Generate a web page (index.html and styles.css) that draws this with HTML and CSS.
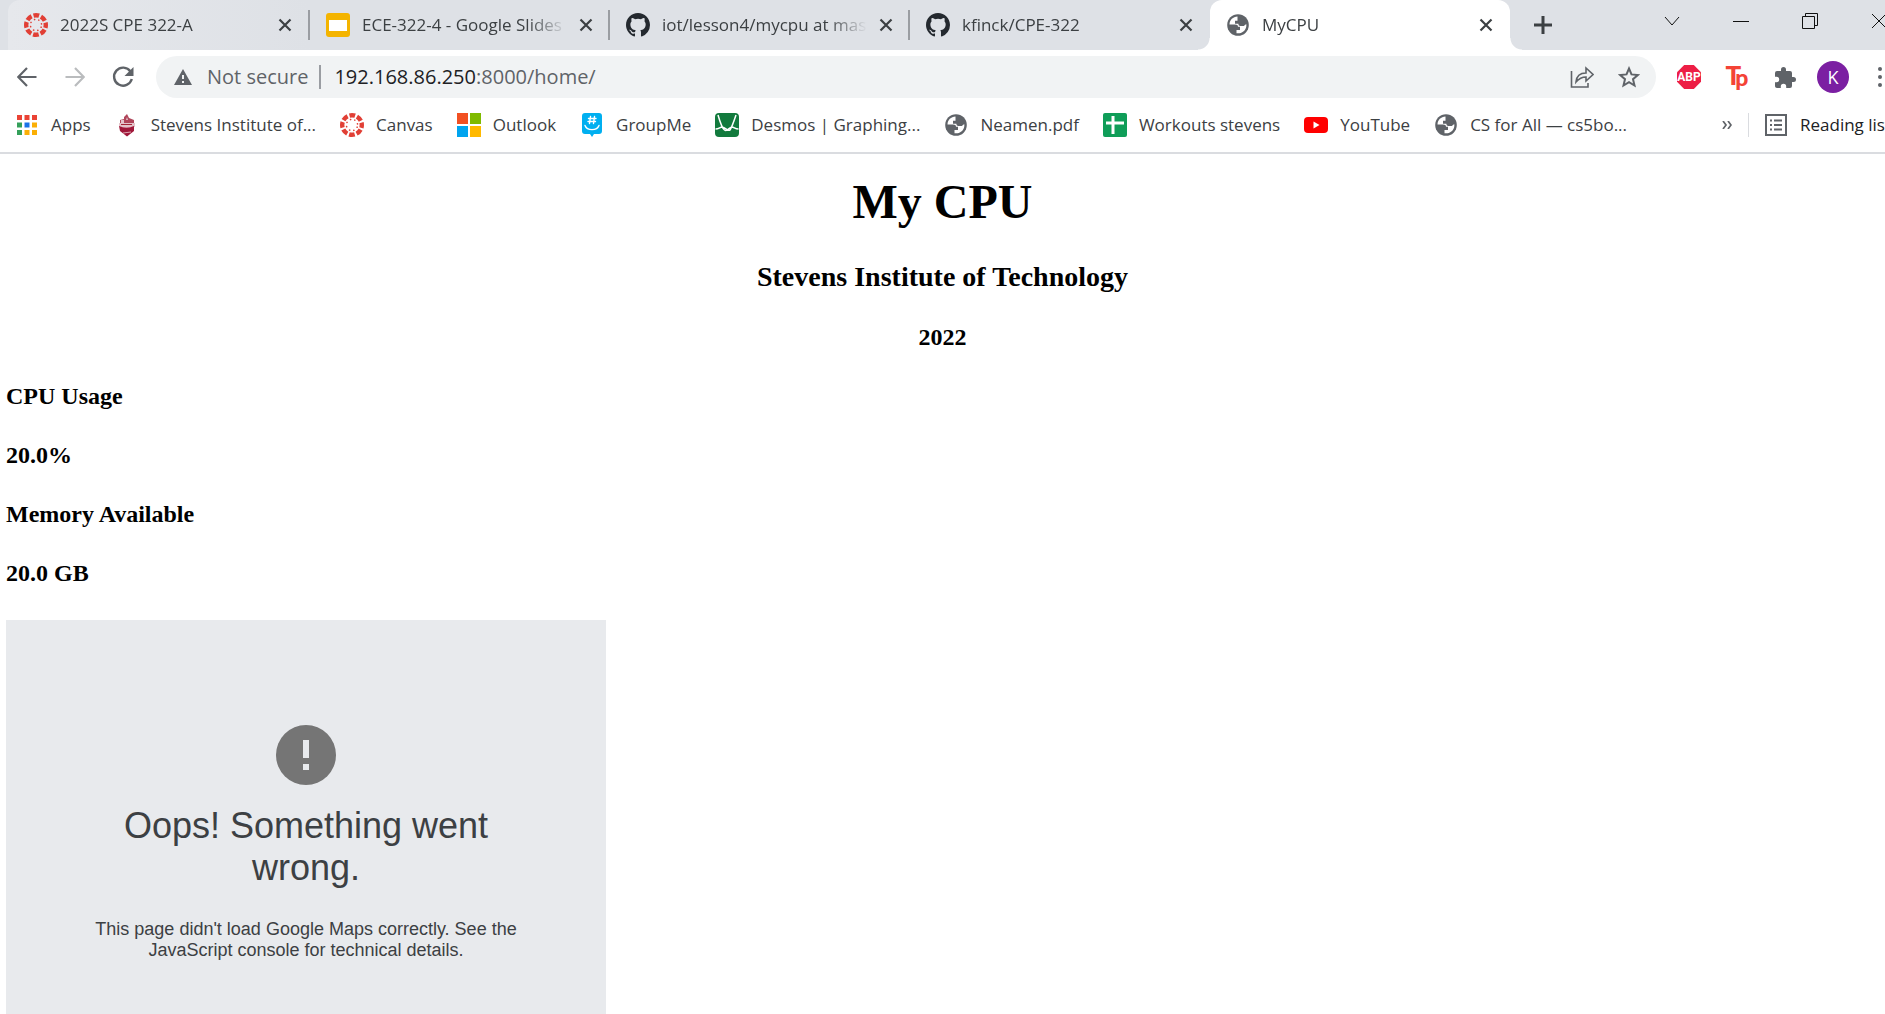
FILE: index.html
```html
<!DOCTYPE html>
<html lang="en">
<head>
<meta charset="utf-8">
<title>MyCPU</title>
<link rel="stylesheet" href="styles.css">
</head>
<body>
<svg class="defs" aria-hidden="true">
  <symbol id="canvas" viewBox="0 0 24 24">
    <circle cx="12" cy="12" r="9.800" fill="none" stroke="#e13f35" stroke-width="4.400" stroke-dasharray="5.700 2" stroke-dashoffset="2.850"/>
    <circle cx="12" cy="12" r="5.600" fill="none" stroke="#e13f35" stroke-width="1.600" stroke-linecap="round" stroke-dasharray="0.100 4.300" stroke-dashoffset="2.200"/>
  </symbol>
  <symbol id="github" viewBox="0 0 16 16"><path fill="#24292f" d="M8 0C3.580 0 0 3.580 0 8c0 3.540 2.290 6.530 5.470 7.590.4.070.55-.17.55-.38 0-.19-.01-.82-.01-1.490-2.010.37-2.530-.49-2.690-.94-.09-.23-.48-.94-.82-1.130-.28-.15-.68-.52-.01-.53.63-.01 1.080.58 1.230.82.72 1.210 1.870.87 2.330.66.070-.52.280-.87.510-1.070-1.780-.2-3.640-.89-3.640-3.950 0-.87.310-1.590.82-2.150-.08-.2-.36-1.020.08-2.120 0 0 .67-.21 2.200.82a7.600 7.600 0 0 1 4 0c1.530-1.040 2.200-.82 2.200-.82.44 1.100.16 1.920.08 2.120.51.56.82 1.270.82 2.150 0 3.070-1.870 3.750-3.650 3.950.29.25.54.73.54 1.480 0 1.070-.01 1.930-.01 2.200 0 .21.15.46.55.38A8 8 0 0 0 16 8c0-4.420-3.580-8-8-8z"/></symbol>
  <symbol id="globe" viewBox="0 0 22 22">
    <circle cx="11" cy="11" r="10.800" fill="#5f6368"/>
    <path fill="#fff" d="M10.500 2.500C6 2.600 2.700 6 2.500 10.500h5.500c2 0 3 .8 3 2.300h2v3.200H9.500v3.200c4.500.9 8.800-2 9.700-6.200.2-1 .2-2 0-3l-2.400 2h-3.500c-1.200 0-1.900-.8-1.900-2.200H8V6.700h2.500z"/>
  </symbol>
  <symbol id="close" viewBox="0 0 14 14"><path d="M1.500 1.500l11 11M12.500 1.500l-11 11" fill="none" stroke="#3c4043" stroke-width="2.200"/></symbol>
</svg>
<header class="browser">
  <nav class="tabs" aria-label="Tabs">
    <div class="tab hover"><svg class="icon"><use href="#canvas"/></svg><span class="label">2022S CPE 322-A</span><button class="x" aria-label="Close"><svg><use href="#close"/></svg></button></div>
    <div class="tab"><svg class="icon" viewBox="0 0 24 24"><rect width="24" height="24" rx="3" fill="#f4b400"/><path fill="#fff" d="M3 7h18v11H3z"/></svg><span class="label">ECE-322-4 - Google Slides</span><button class="x" aria-label="Close"><svg><use href="#close"/></svg></button></div>
    <div class="tab"><svg class="icon"><use href="#github"/></svg><span class="label">iot/lesson4/mycpu at master</span><button class="x" aria-label="Close"><svg><use href="#close"/></svg></button></div>
    <div class="tab last"><svg class="icon"><use href="#github"/></svg><span class="label">kfinck/CPE-322</span><button class="x" aria-label="Close"><svg><use href="#close"/></svg></button></div>
    <div class="tab active"><svg class="icon globe"><use href="#globe"/></svg><span class="label">MyCPU</span><button class="x" aria-label="Close"><svg><use href="#close"/></svg></button></div>
    <button class="new" aria-label="New tab"><svg viewBox="0 0 18 18"><path d="M9 0v18M0 9h18" stroke="#3c4043" stroke-width="3"/></svg></button>
    <div class="window">
      <button aria-label="Search tabs"><svg viewBox="0 0 16 16"><path d="M1 4l7 8 7-8"/></svg></button>
      <button aria-label="Minimize"><svg viewBox="0 0 16 16"><path d="M0 8.500h16"/></svg></button>
      <button aria-label="Restore"><svg viewBox="0 0 16 16"><path d="M.5 3.500h12v12H.5zM3.500 3.500v-3h12v12h-3"/></svg></button>
      <button aria-label="Close window"><svg viewBox="0 0 16 16"><path d="M1 1l14 14M15 1L1 15"/></svg></button>
    </div>
  </nav>
  <div class="toolbar">
    <button aria-label="Back"><svg viewBox="0 0 20 20"><path d="M19.500 10H2M10 1L1.200 10l8.800 9" fill="none" stroke="#5f6368" stroke-width="2.200"/></svg></button>
    <button aria-label="Forward"><svg viewBox="0 0 20 20"><path d="M.5 10H18M10 1l8.800 9-8.800 9" fill="none" stroke="#babcbe" stroke-width="2.200"/></svg></button>
    <button aria-label="Reload"><svg viewBox="0 0 22 22"><path d="M18.500 5.500A9 9 0 1 0 19.800 13" fill="none" stroke="#5f6368" stroke-width="2.400"/><path d="M21.500 1v9h-9z" fill="#5f6368"/></svg></button>
    <div class="omnibox">
      <svg class="warn" viewBox="0 0 18 16"><path d="M9 0l9 16H0z" fill="#5f6368"/><path d="M9 6v4M9 12v2" stroke="#f1f3f4" stroke-width="2"/></svg>
      <span class="secure">Not secure</span>
      <div class="url" role="textbox" aria-label="Address" contenteditable="true" spellcheck="false">192.168.86.250<span>:8000/home/</span></div>
      <button aria-label="Share"><svg class="share" viewBox="0 0 24 22"><path d="M1.500 5v16h16.500v-4M6 16c.5-6 4-9 10-9V2l7 6.500-7 6.500v-4c-4 0-7 1.500-10 5z" fill="none" stroke="#5f6368" stroke-width="1.600"/></svg></button>
      <button aria-label="Bookmark"><svg class="star" viewBox="0 0 22 22"><path d="M11 2.500l2.500 5.900 6.400.6-4.900 4.200 1.500 6.300L11 16.200l-5.500 3.300L7 13.200 2.100 9l6.400-.6z" fill="none" stroke="#5f6368" stroke-width="2"/></svg></button>
    </div>
    <div class="extensions">
      <button class="abp">ABP</button>
      <button class="tp"><span>T</span><span class="low">p</span></button>
      <button aria-label="Extensions"><svg viewBox="2 1 21 21"><path fill="#5f6368" d="M20.500 11H19V7a2 2 0 0 0-2-2h-4V3.500a2.500 2.500 0 0 0-5 0V5H4a2 2 0 0 0-2 2v3.800h1.500a2.700 2.700 0 0 1 0 5.400H2V20c0 1.100.9 2 2 2h3.800v-1.500a2.700 2.700 0 0 1 5.400 0V22H17a2 2 0 0 0 2-2v-4h1.500a2.500 2.500 0 0 0 0-5z"/></svg></button>
      <button class="avatar">K</button>
      <button class="more" aria-label="Menu"><svg viewBox="0 0 4 20"><g fill="#5f6368"><circle cx="2" cy="2" r="2"/><circle cx="2" cy="10" r="2"/><circle cx="2" cy="18" r="2"/></g></svg></button>
    </div>
  </div>
  <nav class="bookmarks" aria-label="Bookmarks">
    <a href="#"><svg class="apps" viewBox="0 0 20 20"><path fill="#ea4335" d="M0 0h5v5H0zM7.500 0h5v5h-5zM15 0h5v5h-5z"/><path fill="#34a05a" d="M0 7.500h5v5H0zM0 15h5v5H0z"/><path fill="#1a73e8" d="M7.500 7.500h5v5h-5z"/><path fill="#fbaf05" d="M15 7.500h5v5h-5zM7.500 15h5v5h-5zM15 15h5v5h-5z"/></svg>Apps</a>
    <a href="#"><svg class="stevens" viewBox="0 0 16 24"><path fill="#b0455a" d="M1 7l4-1V4l3-3 2 4 5 2v3H1z"/><path fill="#e3c3ca" d="M2 7h3v3H2zM8 4l1 3H7zM0 10h16v4H0z"/><path stroke="#a32638" d="M2 11.500h11"/><path fill="#a0183a" d="M0 13c5 2 10 2 15 0v5l-7 5.500L1 18z"/><path d="M4 20l8-1" stroke="#dba5b0"/></svg>Stevens Institute of...</a>
    <a href="#"><svg class="icon"><use href="#canvas"/></svg>Canvas</a>
    <a href="#"><svg class="icon" viewBox="0 0 24 24"><path fill="#f25022" d="M0 0h11v11H0z"/><path fill="#7fba00" d="M13 0h11v11H13z"/><path fill="#00a4ef" d="M0 13h11v11H0z"/><path fill="#ffb900" d="M13 13h11v11H13z"/></svg>Outlook</a>
    <a href="#"><svg class="icon" viewBox="0 0 24 24"><path fill="#00aff0" d="M5 0h14q3 0 3 3v15q0 3-3 3h-5l-2 3-2-3H5q-3 0-3-3V3q0-3 3-3z"/><path d="M10.500 3.500l-1 7M14.500 3.500l-1 7M8.500 5.500h7.500M8 8.500h7.500M5 12.500c2 5.500 12 5.500 14 0" fill="none" stroke="#fff" stroke-width="1.400" stroke-linecap="round"/></svg>GroupMe</a>
    <a href="#"><svg class="icon" viewBox="0 0 24 24"><rect width="24" height="24" rx="4" fill="#127a3d"/><path d="M3 2c2 7 4 13 6.500 15 3 2 5-3 7.500-3 2 0 3 2 6.500 2M21 2c-2 6-4 12-6 15-2 2-5-3-8-3-2 0-3 2-6.500 2" fill="none" stroke="#fff" stroke-width="1.500"/></svg>Desmos | Graphing...</a>
    <a href="#"><svg class="icon globe"><use href="#globe"/></svg>Neamen.pdf</a>
    <a href="#"><svg class="icon" viewBox="0 0 24 24"><rect width="24" height="24" rx="2" fill="#0f9d58"/><path d="M10 3v18M3 10h18" stroke="#fff" stroke-width="3"/></svg>Workouts stevens</a>
    <a href="#"><svg class="icon" viewBox="0 0 24 24"><rect y="4" width="24" height="16" rx="4" fill="#f00"/><path d="M9.500 8.500l6 3.500-6 3.500z" fill="#fff"/></svg>YouTube</a>
    <a href="#"><svg class="icon globe"><use href="#globe"/></svg>CS for All — cs5bo...</a>
    <button class="overflow" aria-label="More bookmarks"><svg viewBox="0 0 10 8"><path d="M1 0l3 4-3 4M6 0l3 4-3 4" fill="none" stroke="#5f6368" stroke-width="1.700"/></svg></button>
    <button class="reading"><svg viewBox="0 0 22 22"><path d="M1 1h20v20H1z" fill="none" stroke="#5f6368" stroke-width="2"/><path d="M5 6.500h2M5 11h2M5 15.500h2M9 6.500h8M9 11h8M9 15.500h8" stroke="#5f6368" stroke-width="2"/></svg>Reading list</button>
  </nav>
</header>
<main>
  <div class="heading">
    <h1>My CPU</h1>
    <h2>Stevens Institute of Technology</h2>
    <h3>2022</h3>
  </div>
  <h3>CPU Usage</h3>
  <h3>20.0%</h3>
  <h3>Memory Available</h3>
  <h3>20.0 GB</h3>
  <section class="map">
    <svg viewBox="0 0 60 60"><circle cx="30" cy="30" r="30" fill="#757575"/><path d="M27 15h6v18h-6zM27 39h6v6h-6z" fill="#e8eaed"/></svg>
    <p class="title">Oops! Something went wrong.</p>
    <p class="message">This page didn't load Google Maps correctly. See the JavaScript console for technical details.</p>
  </section>
</main>
</body>
</html>
```
FILE: styles.css
```css
* { box-sizing: border-box; }
body { margin: 0; height: 100vh; overflow: hidden; background: #fff; color: #000; font-family: "Liberation Serif", "Times New Roman", serif; }
button { display: flex; align-items: center; justify-content: center; flex: none; padding: 0; border: 0; background: none; color: inherit; font: inherit; }
svg { display: block; flex: none; }
.defs { width: 0; height: 0; position: absolute; }
.icon { width: 24px; height: 24px; }
.icon.globe { width: 22px; height: 22px; margin: 0 1px; }

.browser { border-bottom: 2px solid #dadce0; color: #3c4043; font: 17px/24px "Open Sans", "Segoe UI", sans-serif; white-space: nowrap; overflow: hidden; }
.tabs { display: flex; height: 50px; background: #dee1e6; padding-left: 8px; overflow: hidden; }
.tab { position: relative; display: flex; align-items: center; flex: none; width: 300px; padding: 0 17px 0 16px; }
.tab.hover { width: 302px; padding-right: 18px; background: linear-gradient(90deg, #e6e8ec, #dee1e6); border-radius: 12px 12px 0 0; }
.tab:not(.active):not(.last)::after { content: ""; position: absolute; right: 0; top: 10px; width: 2px; height: 30px; background: #9a9da2; }
.tab .label { flex: 1; min-width: 0; margin: 0 12px; overflow: hidden; mask-image: linear-gradient(90deg, #000 calc(100% - 40px), transparent); }
.tab .x svg { width: 14px; height: 14px; }
.tab.active { background: #fff; border-radius: 12px 12px 0 0; }
.tab.active::before, .tab.active::after { content: ""; position: absolute; bottom: 0; width: 12px; height: 12px; }
.tab.active::before { left: -12px; background: radial-gradient(circle at 0 0, #dee1e6 11px, #fff 12px); }
.tab.active::after { right: -12px; background: radial-gradient(circle at 100% 0, #dee1e6 11px, #fff 12px); }
.new { width: 66px; }
.new svg { width: 18px; height: 18px; }
.window { display: flex; margin-left: auto; margin-right: -28px; }
.window button { width: 69px; padding-bottom: 9px; }
.window svg { width: 16px; height: 16px; fill: none; stroke: #111; }

.toolbar { display: flex; align-items: center; height: 54px; padding-left: 3px; }
.toolbar > button { width: 48px; }
.toolbar > button svg { width: 20px; height: 20px; }
.toolbar > button:nth-child(3) svg { width: 22px; height: 22px; }
.omnibox { display: flex; align-items: center; flex: 1; height: 42px; margin-left: 9px; padding: 0 16px 0 18px; border-radius: 21px; background: #f1f3f4; font-size: 20px; }
.warn { width: 18px; height: 16px; }
.secure { margin-left: 15px; padding-right: 11px; border-right: 2px solid #9a9da2; color: #5f6368; }
.url { flex: 1; padding-left: 13px; color: #202124; }
.url span { color: #5f6368; }
.omnibox button { margin-left: 24px; }
.share { width: 24px; height: 22px; }
.star { width: 22px; height: 22px; }
.extensions { display: flex; align-items: center; gap: 16px; margin-left: 17px; margin-right: 3px; }
.extensions button { width: 32px; height: 32px; }
.extensions svg { width: 21px; height: 21px; }
.extensions .abp { width: 24px; height: 24px; margin: 0 4px; background: #ed1e45; color: #fff; font: 700 12px/24px Roboto, sans-serif; clip-path: polygon(30% 0, 70% 0, 100% 30%, 100% 70%, 70% 100%, 30% 100%, 0 70%, 0 30%); }
.extensions .tp { align-items: flex-start; color: #f44336; font: 900 26px/28px Lato, sans-serif; }
.extensions .tp .low { margin-left: -6px; font-size: 23px; line-height: 32px; }
.extensions .avatar { border-radius: 50%; background: #7b1fa2; color: #fff; font-size: 18px; }
.extensions .more { width: 4px; margin-left: 13px; }
.extensions .more svg { width: 4px; height: 20px; }

.bookmarks { display: flex; align-items: center; gap: 24px; height: 48px; padding: 0 0 6px 17px; }
.bookmarks a { display: flex; align-items: center; gap: 12px; flex: none; color: inherit; text-decoration: none; }
.apps { width: 20px; height: 20px; margin-right: 2px; }
.stevens { width: 16px; height: 24px; margin: 0 4px; }
.overflow { margin-left: auto; }
.overflow svg { width: 10px; height: 8px; }
.reading { height: 24px; margin-left: -8px; margin-right: -6px; padding-left: 16px; gap: 13px; border-left: 1px solid #dadce0; color: #202124; }
.reading svg { width: 22px; height: 22px; }

main { padding: 0 6px; }
h1, h2, h3 { margin: 0; font-weight: 700; }
h1 { padding-top: 20px; font-size: 48px; line-height: 56px; }
h2 { padding-top: 31px; font-size: 28px; line-height: 31px; }
h3 { padding-top: 32px; font-size: 24px; line-height: 27px; }
.heading { text-align: center; }
.map { width: 600px; height: 394px; margin-top: 33px; padding: 105px 80px 0; background: #e8eaed; color: #3c4043; font-family: "Liberation Sans", Arial, sans-serif; text-align: center; }
.map svg { width: 60px; height: 60px; margin: 0 auto; }
.map p { margin: 0; }
.map .title { padding: 20px 32px 0; font-size: 36px; line-height: 42px; }
.map .message { padding-top: 30px; font-size: 18px; line-height: 21px; }
```
